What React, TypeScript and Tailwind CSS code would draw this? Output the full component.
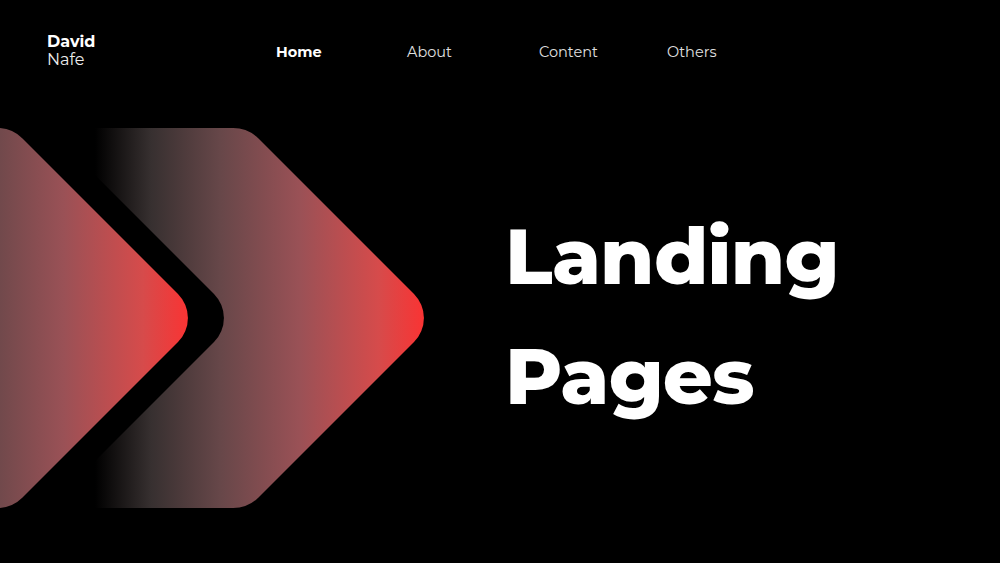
import React from "react";

const font = { fontFamily: "Montserrat, Inter, 'Noto Sans', sans-serif" };

const SHAPE =
  "M95,0 H233.1 A36,36 0 0 1 258.5,10.5 L414,166 A34,34 0 0 1 414,214 L258.5,369.5 A36,36 0 0 1 233.1,380 H95 Z";

function Chevrons() {
  return (
    <svg width="440" height="380" viewBox="0 0 440 380" overflow="visible" className="block shrink-0">
      <defs>
        <linearGradient id="g2" gradientUnits="userSpaceOnUse" x1="95" y1="0" x2="425" y2="0">
          <stop offset="0" stopColor="#000000" />
          <stop offset="0.17" stopColor="#373030" />
          <stop offset="0.38" stopColor="#674749" />
          <stop offset="0.62" stopColor="#9a5156" />
          <stop offset="0.86" stopColor="#d64b4b" />
          <stop offset="1" stopColor="#fa3333" />
        </linearGradient>
      </defs>
      <path d={SHAPE} fill="url(#g2)" />
      <g transform="translate(-200,0)">
        <path d={SHAPE} fill="#000" />
        <rect x="-300" y="0" width="400" height="380" fill="#000" />
      </g>
      <g transform="translate(-236,0)">
        <path d={SHAPE} fill="url(#g2)" />
        <rect x="-300" y="0" width="400" height="380" fill="url(#g2)" />
      </g>
    </svg>
  );
}

export default function App() {
  const nav = [
    { n: "Home", w: "w-[131px] font-bold text-white" },
    { n: "About", w: "w-[132px] font-normal text-[#e0e0e0]" },
    { n: "Content", w: "w-[128px] font-normal text-[#e0e0e0]" },
    { n: "Others", w: "w-[100px] font-normal text-[#e0e0e0]" },
  ];
  return (
    <div className="w-[1000px] h-[563px] bg-black text-white overflow-hidden" style={font}>
      <header className="flex items-start h-[128px]">
        <div className="w-[276px] pl-[47px] pt-[33px] text-[16px] leading-[18px]">
          <div className="font-bold">David</div>
          <div className="font-normal text-[#ececec]">Nafe</div>
        </div>
        <nav className="flex pt-[43px] text-[14.5px] leading-[18px]">
          {nav.map((it) => (
            <div key={it.n} className={it.w}>
              {it.n}
            </div>
          ))}
        </nav>
      </header>
      <main className="flex">
        <Chevrons />
        <div className="ml-[65px] pt-[68px] font-extrabold text-[78px] leading-[120px] tracking-[-1px]">
          <div>Landing</div>
          <div>Pages</div>
        </div>
      </main>
    </div>
  );
}
